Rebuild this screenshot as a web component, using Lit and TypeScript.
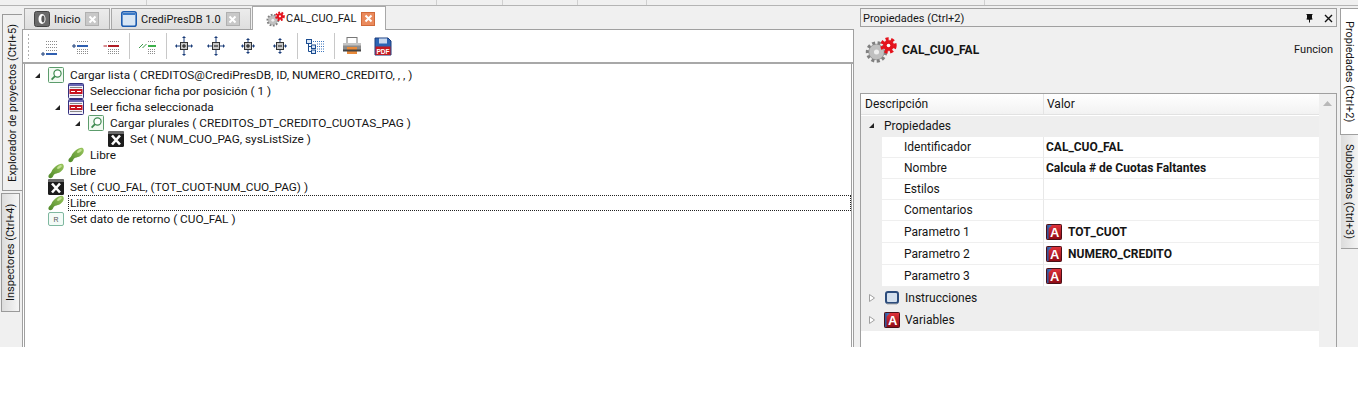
import { LitElement, html, css, svg } from "lit";
import { customElement } from "lit/decorators.js";

const aIcon = () => html`<svg class="i16" viewBox="0 0 16 16">
  <defs><linearGradient id="ag" x1="0" y1="0" x2="0" y2="1"><stop offset="0" stop-color="#e2343c"/><stop offset="1" stop-color="#8c0a14"/></linearGradient></defs>
  <rect x="0.5" y="0.5" width="15" height="15" rx="0.8" fill="url(#ag)" stroke="#4a1018"/>
  <path d="M1 1H6L1 6Z" fill="#3f6fb5"/><rect x="1" y="1" width="1.6" height="14" fill="#35569a"/>
  <text x="8.6" y="13.2" font-family="Liberation Sans" font-weight="700" font-size="13" fill="#fff" text-anchor="middle">A</text>
</svg>`;

const searchIcon = html`<svg class="i16" viewBox="0 0 16 16">
  <rect x="0.5" y="0.5" width="15" height="15" rx="1" fill="#f2faf2" stroke="#5c9c6c"/>
  <circle cx="9.5" cy="6.5" r="3.6" fill="#fff" stroke="#3e8a50" stroke-width="1.2"/>
  <path d="M7 9.2L3.6 12.6" stroke="#3e8a50" stroke-width="1.8"/>
</svg>`;

const readIcon = html`<svg class="i16" viewBox="0 0 16 16">
  <rect x="0.5" y="0.5" width="15" height="15" rx="1" fill="#f2f0fa" stroke="#33307e"/>
  <rect x="1" y="1" width="14" height="2" fill="#6a68b4"/>
  <rect x="2" y="4" width="12" height="1" fill="#888"/>
  <rect x="2" y="12" width="12" height="1" fill="#888"/>
  <rect x="1.5" y="6" width="13" height="5" fill="#c8121e"/>
  <path d="M3 8.5H7M9 8.5H13" stroke="#fff" stroke-width="1"/>
</svg>`;

const footIcon = html`<svg class="i16" viewBox="0 0 16 16">
  <defs><linearGradient id="fg" x1="1" y1="0" x2="0" y2="1"><stop offset="0" stop-color="#9cc860"/><stop offset="1" stop-color="#4c8626"/></linearGradient></defs>
  <path d="M15.8 3C16 7 12 10 8.6 10.4C6.8 10.6 5.8 11.4 5.2 13C4.2 15.8 0.6 16 0.4 13.6C0.3 11.6 2.6 10.8 3.6 8.6C5.6 3.4 14.8 -2.4 15.8 3Z" fill="url(#fg)"/>
  <ellipse cx="11.4" cy="4" rx="2.8" ry="1.2" transform="rotate(-35 11.4 4)" fill="#c4e294"/>
</svg>`;

const xIcon = html`<svg class="i16" viewBox="0 0 16 16">
  <rect x="0" y="0" width="16" height="16" rx="1.5" fill="#1c1c1c"/>
  <path d="M0 1.5Q0 0 1.5 0H14.5Q16 0 16 1.5V3H0Z" fill="#6a6a6a"/>
  <path d="M4 4.5L12 13.5M12 4.5L4 13.5" stroke="#fff" stroke-width="2.6"/>
</svg>`;

const retIcon = html`<svg class="i16" viewBox="0 0 16 16">
  <rect x="0.5" y="1.5" width="15" height="13" rx="1.5" fill="#f3fbf7" stroke="#7fb8a0"/>
  <text x="8" y="11" font-family="Liberation Sans" font-size="7" fill="#555" text-anchor="middle">R</text>
</svg>`;

const gear = (cx: number, cy: number, r: number, fill: string, edge: string, hole: string) => svg`
  <circle cx=${cx} cy=${cy} r=${r} fill="none" stroke=${edge} stroke-width="3.4" stroke-dasharray="3 2.4"/>
  <circle cx=${cx} cy=${cy} r=${r - 1.2} fill=${fill} stroke=${edge} stroke-width="0.6"/>
  <circle cx=${cx} cy=${cy} r=${r * 0.28} fill=${hole}/>`;

const gears = (cls: string) => html`<svg class=${cls} viewBox="0 0 32 26">
  ${gear(11.5, 15, 9, "#c0c0c0", "#808080", "#eee")}
  ${gear(23.5, 8.5, 6.5, "#e4121c", "#e4121c", "#fff")}
</svg>`;

const lines = (x: number, w: number, ys: number[]) => ys.map(
  (y) => svg`<path d=${`M${x} ${y + 0.5}h${w}`} stroke="#8c8c8c" stroke-width="1" stroke-dasharray="1 1"/>`
);

const listIcon = (bar: string, barY: number, ys: number[], mark: unknown, x = 6, w = 11) => html`<svg class="t" viewBox="0 0 20 20">
  ${lines(x, w, ys)}
  <rect x=${x} y=${barY} width=${w} height="2" fill=${bar}/>
  ${mark}
</svg>`;

const cross = (box: string, inner: string, long: boolean) => {
  const a = long ? 1 : 3;
  const b = long ? 19 : 17;
  return html`<svg class="t" viewBox="0 0 20 20">
    <path d=${`M${a + 2} 10H${b - 2}M10 ${a + 1}V${b - 1}`} stroke="#1a3c78" stroke-width="1"/>
    <path d=${`M${a + 2} 8v4l-2-2zM${b - 2} 8v4l2-2zM8 ${a + 1}h4l-2-2zM8 ${b - 1}h4l-2 2z`} fill="#1a3c78"/>
    <rect x="6.5" y="6.5" width="7" height="7" fill=${box} stroke="#333"/>
    <path d=${inner} stroke="#111" stroke-width="1"/>
  </svg>`;
};
const PLUS = "M8 10H12M10 8V12";
const MINUS = "M8 10H12";

const treeIcon = html`<svg class="t" viewBox="0 0 20 20">
  <path d="M3.5 7V15.5M3.5 10.5H7M3.5 15.5H7" stroke="#1a4c90"/>
  <rect x="1.5" y="3.5" width="5" height="4" fill="#dbe8f8" stroke="#1a4c90"/>
  <rect x="6.5" y="9" width="4" height="3.5" fill="#dbe8f8" stroke="#1a4c90"/>
  <rect x="6.5" y="14" width="4" height="3.5" fill="#dbe8f8" stroke="#1a4c90"/>
  <path d="M8 5.5h11M12 8h7M12 10.5h7M12 13h7M12 15.5h7" stroke="#3f78c0" stroke-dasharray="1 1"/>
</svg>`;

const printIcon = html`<svg class="t" viewBox="0 0 20 20">
  <rect x="5" y="1.5" width="10" height="6" fill="#fff" stroke="#777"/>
  <rect x="1" y="7" width="18" height="8" rx="1.5" fill="#8c8c8c"/>
  <rect x="1" y="7" width="18" height="2.5" fill="#c4c4c4"/>
  <rect x="5" y="11" width="10" height="7" fill="#e98a3a"/>
  <rect x="1" y="13.5" width="18" height="2" fill="#444"/>
</svg>`;

const pdfIcon = html`<svg class="t" viewBox="0 0 20 20">
  <path d="M2 2H15L18 5V19H2Z" fill="#2c64b4" stroke="#1c3c7c"/>
  <rect x="6" y="2.5" width="8" height="5" fill="#c8d8ee"/>
  <rect x="2.5" y="10.5" width="15" height="8.5" fill="#c41a20"/>
  <text x="10" y="17.8" font-family="Liberation Sans" font-weight="700" font-size="6.6" fill="#fff" text-anchor="middle">PDF</text>
</svg>`;

const closeBtn = (active: boolean) => html`<span class=${active ? "cl on" : "cl"}>
  <svg viewBox="0 0 9 9"><path d="M1.5 1.5L7.5 7.5M7.5 1.5L1.5 7.5" stroke="#fff" stroke-width="2"/></svg>
</span>`;

const tree = [
  { l: 0, e: true, i: searchIcon, t: "Cargar lista ( CREDITOS@CrediPresDB, ID, NUMERO_CREDITO, , , )" },
  { l: 1, e: false, i: readIcon, t: "Seleccionar ficha por posición ( 1 )" },
  { l: 1, e: true, i: readIcon, t: "Leer ficha seleccionada" },
  { l: 2, e: true, i: searchIcon, t: "Cargar plurales ( CREDITOS_DT_CREDITO_CUOTAS_PAG )" },
  { l: 3, e: false, i: xIcon, t: "Set ( NUM_CUO_PAG, sysListSize )" },
  { l: 1, e: false, i: footIcon, t: "Libre" },
  { l: 0, e: false, i: footIcon, t: "Libre" },
  { l: 0, e: false, i: xIcon, t: "Set ( CUO_FAL, (TOT_CUOT-NUM_CUO_PAG) )" },
  { l: 0, e: false, i: footIcon, t: "Libre", f: true },
  { l: 0, e: false, i: retIcon, t: "Set dato de retorno ( CUO_FAL )" },
];

const props = [
  { d: "Identificador", v: "CAL_CUO_FAL" },
  { d: "Nombre", v: "Calcula # de Cuotas Faltantes" },
  { d: "Estilos", v: "" },
  { d: "Comentarios", v: "" },
  { d: "Parametro 1", v: "TOT_CUOT", a: true },
  { d: "Parametro 2", v: "NUMERO_CREDITO", a: true },
  { d: "Parametro 3", v: "", a: true },
];

@customElement("app-root")
export class AppRoot extends LitElement {
  static styles = css`
    :host { display: block; font-family: Roboto, "Open Sans", sans-serif; font-size: 12px; color: #151515; }
    svg { display: block; flex: none; }
    .i16 { width: 16px; height: 16px; }
    .app { height: 347px; background: #f0f0f0; display: flex; flex-direction: column; overflow: hidden; }
    .strip { height: 6px; flex: none; display: flex; border-bottom: 1px solid #b4b4b4; box-sizing: border-box; }
    .strip i { border-right: 1px solid #d0d0d0; height: 5px; box-sizing: border-box; }
    .s1 { width: 147px; } .s2 { width: 290px; } .s3 { width: 66px; } .s4 { width: 75px; } .s5 { width: 69px; } .s6 { width: 338px; }
    .body { flex: 1; display: flex; min-height: 0; }

    .rail { width: 22px; flex: none; display: flex; flex-direction: column; padding-top: 8px; gap: 2px; box-sizing: border-box; }
    .vt { writing-mode: vertical-rl; white-space: nowrap; box-sizing: border-box; display: flex; align-items: center; justify-content: center; font-size: 11px; }
    .vl { transform: rotate(180deg); border: 1px solid #9a9a9a; }
    .v1 { height: 177px; width: 20px; margin-left: 2px; background: #f0f0f0; border-left: none; }
    .v2 { height: 119px; width: 19px; margin-left: 1px; background: linear-gradient(to left, #dcdcdc, #f6f6f6); }

    .main { width: 832px; flex: none; display: flex; flex-direction: column; }
    .tabs { height: 24px; flex: none; display: flex; align-items: flex-end; padding-left: 2px; gap: 1px; border-bottom: 1px solid #a0a0a0; box-sizing: border-box; }
    .tab { height: 21px; display: flex; align-items: center; box-sizing: border-box; border: 1px solid #a8a8a8; border-bottom: none; background: linear-gradient(#ececec, #dedede); padding-left: 9px; font-size: 11px; }
    .tab.w1 { width: 86px; } .tab.w2 { width: 140px; }
    .tab.w3 { width: 134px; height: 24px; background: #fff; margin-bottom: -1px; padding-left: 13px; }
    .tab svg.ti { width: 16px; height: 16px; margin-right: 4px; }
    .tab svg.tg { width: 19px; height: 16px; margin-right: 1px; }
    .cl { width: 14px; height: 14px; margin-left: 5px; background: #c8c8c8; border: 1px solid #b0b0b0; box-sizing: border-box; display: flex; align-items: center; justify-content: center; }
    .cl.on { background: #ea8a5c; border-color: #d06a3a; }
    .cl svg { width: 9px; height: 9px; }

    .pane { flex: 1; display: flex; flex-direction: column; min-height: 0; background: #fff; border-left: 1px solid #a0a0a0; border-right: 1px solid #a0a0a0; }
    .toolbar { height: 34px; flex: none; display: flex; align-items: center; padding-left: 4px; border-bottom: 2px solid #a8a8a8; box-sizing: border-box; }
    .grip { width: 3px; height: 26px; margin-right: 4.5px; background-image: radial-gradient(#b0b0b0 1px, transparent 1px); background-size: 3px 4px; }
    .b { width: 31px; display: flex; justify-content: center; flex: none; }
    .b.m { width: 33px; } .b.n { width: 32px; } .b.o { width: 30px; }
    .t { width: 20px; height: 20px; }
    .sep { width: 1px; height: 26px; background: #c8c8c8; margin: 0 1px; flex: none; }
    .sep.wide { margin: 0 2px; }

    .tree { flex: 1; margin: 0 1px; background: #fff; border-left: 1px solid #a0a0a0; border-right: 1px solid #a0a0a0; padding-top: 3px; min-height: 0; font-size: 11.8px; }
    .row { height: 16px; display: flex; align-items: center; }
    .exp { width: 16px; flex: none; }
    .exp svg { width: 5px; height: 5px; margin-left: 3px; }
    .lab { flex: 1; height: 16px; line-height: 14px; margin-left: 4px; padding-left: 1px; border: 1px solid transparent; box-sizing: border-box; white-space: nowrap; }
    .lab.f { border: 1px dotted #222; }

    .panel { width: 477px; flex: none; margin-left: 6px; padding-top: 2px; display: flex; flex-direction: column; }
    .phead { height: 19px; flex: none; border: 1px solid #a0a0a0; box-sizing: border-box; display: flex; align-items: center; padding: 1px 3px 0 2px; gap: 10px; font-size: 11px; }
    .phead span { flex: 1; }
    .phead svg { width: 9px; height: 9px; }
    .info { height: 66px; flex: none; display: flex; align-items: flex-start; padding: 10px 4px 0 5px; box-sizing: border-box; }
    .info svg { width: 32px; height: 26px; margin-right: 5px; }
    .info b { flex: 1; padding-top: 6px; }
    .info span { padding-top: 6px; font-size: 11px; }

    .pg { flex: 1; border: 1px solid #a0a0a0; border-bottom: none; display: flex; background: #fff; min-height: 0; }
    .grid { flex: 1; min-width: 0; }
    .sb { width: 17px; flex: none; background: #f0f0f0; display: flex; justify-content: center; padding-top: 7px; box-sizing: border-box; }
    .sb svg { width: 9px; height: 5px; }
    .gh { height: 21px; display: grid; grid-template-columns: 182px 1fr; align-items: center; background: linear-gradient(#ffffff, #f2f2f2); border-bottom: 1px solid #e2e2e2; box-sizing: border-box; }
    .gh span { padding-left: 4px; height: 100%; display: flex; align-items: center; }
    .gh span + span { padding-left: 3px; border-left: 1px solid #e4e4e4; }
    .grp { height: 22px; background: #eeeeee; display: flex; align-items: center; }
    .grp.first { height: 21px; margin-top: 1px; padding-bottom: 2px; box-sizing: border-box; }
    .grp .tw { width: 21px; flex: none; display: flex; justify-content: center; }
    .tw svg { width: 6px; height: 8px; }
    .grp.first .tw svg { width: 5px; height: 5px; }
    .grp .gi { margin: 0 5px 0 2px; }
    .grp .gl { margin-left: 2px; }
    .pr { height: 21px; display: grid; grid-template-columns: 21px 161px 1fr; }
    .pr.t22 { height: 22px; }
    .pr .gut { background: #eeeeee; }
    .pr .d { padding-left: 22px; display: flex; align-items: center; border-bottom: 1px solid #efefef; box-sizing: border-box; }
    .pr .v { padding-left: 2px; display: flex; align-items: center; gap: 6px; font-weight: 700; border-left: 1px solid #e8e8e8; border-bottom: 1px solid #efefef; box-sizing: border-box; }

    .rrail { width: 21px; flex: none; display: flex; flex-direction: column; padding-top: 2px; }
    .r1 { height: 127px; width: 18px; margin-left: 3px; background: #fff; border: 1px solid #a0a0a0; border-right: none; }
    .r2 { height: 114px; width: 17px; margin-left: 4px; background: linear-gradient(to left, #f4f4f4, #dcdcdc); border-bottom: 1px solid #a0a0a0; }
  `;

  render() {
    const tri = html`<svg viewBox="0 0 5 5"><path d="M5 0V5H0Z" fill="#222"/></svg>`;
    const open = html`<svg viewBox="0 0 6 8"><path d="M.5 .5L5.5 4L.5 7.5Z" fill="#fff" stroke="#a0a0a0"/></svg>`;
    return html`<div class="app">
      <div class="strip"><i class="s1"></i><i class="s2"></i><i class="s3"></i><i class="s4"></i><i class="s5"></i><i class="s6"></i></div>
      <div class="body">
        <div class="rail">
          <div class="vt vl v1">Explorador de proyectos (Ctrl+5)</div>
          <div class="vt vl v2">Inspectores (Ctrl+4)</div>
        </div>
        <div class="main">
          <div class="tabs">
            <div class="tab w1">
              <svg class="ti" viewBox="0 0 16 16"><rect x=".5" y=".5" width="15" height="15" rx="2" fill="#6a6a6a" stroke="#444"/><ellipse cx="8" cy="8" rx="3.5" ry="5" fill="#fff"/><ellipse cx="9" cy="8" rx="1.6" ry="3.4" fill="#555"/></svg>
              Inicio${closeBtn(false)}
            </div>
            <div class="tab w2">
              <svg class="ti" viewBox="0 0 16 16"><rect x=".8" y=".8" width="14.4" height="14.4" rx="2" fill="#d8e6f4" stroke="#1c5cb0" stroke-width="1.6"/><rect x="2" y="2" width="12" height="2" fill="#3a7ac8"/></svg>
              CrediPresDB 1.0${closeBtn(false)}
            </div>
            <div class="tab w3">${gears("tg")}CAL_CUO_FAL${closeBtn(true)}</div>
          </div>
          <div class="pane">
            <div class="toolbar">
              <div class="grip"></div>
              <div class="b">${listIcon("#2f5fb0", 17, [5, 8, 11, 14], svg`<path d="M1 18H5M3 16V20" stroke="#1a3c78"/>`)}</div>
              <div class="b">${listIcon("#2f5fb0", 9, [5, 13, 15, 17], svg`<path d="M1 10H5M3 8V12" stroke="#1a3c78"/>`)}</div>
              <div class="b">${listIcon("#b01c24", 9, [5, 13, 15, 17], svg`<path d="M1.5 10H5" stroke="#b01c24"/>`)}</div>
              <div class="sep"></div>
              <div class="b m">${listIcon("#3cb04a", 9, [5, 13, 15, 17], svg`<path d="M2 12L6 8M5.5 12L9.5 8" stroke="#3c9a4a"/>`, 11, 8)}</div>
              <div class="sep wide"></div>
              <div class="b">${cross("#c8c8c8", PLUS, true)}</div>
              <div class="b n">${cross("#c8c8c8", MINUS, true)}</div>
              <div class="b n">${cross("#c8c8c8", PLUS, false)}</div>
              <div class="b n">${cross("#c8c8c8", MINUS, false)}</div>
              <div class="sep"></div>
              <div class="b m">${treeIcon}</div>
              <div class="sep wide"></div>
              <div class="b">${printIcon}</div>
              <div class="b o">${pdfIcon}</div>
            </div>
            <div class="tree">
              ${tree.map((r) => html`<div class="row" style=${`padding-left:${7 + r.l * 20}px`}>
                <div class="exp">${r.e ? tri : ""}</div>
                ${r.i}
                <div class=${r.f ? "lab f" : "lab"}>${r.t}</div>
              </div>`)}
            </div>
          </div>
        </div>
        <div class="panel">
          <div class="phead"><span>Propiedades (Ctrl+2)</span>
            <svg viewBox="0 0 9 9"><path d="M1.5 .5H7.5M4.5 .5V8.5M2.5 1V5H6.5V1M1.5 5H7.5" stroke="#111" fill="#111"/></svg>
            <svg viewBox="0 0 9 9"><path d="M1 1L8 8M8 1L1 8" stroke="#111" stroke-width="1.4"/></svg>
          </div>
          <div class="info">${gears("")}<b>CAL_CUO_FAL</b><span>Funcion</span></div>
          <div class="pg">
            <div class="grid">
              <div class="gh"><span>Descripción</span><span>Valor</span></div>
              <div class="grp first"><div class="tw">${tri}</div><span class="gl">Propiedades</span></div>
              ${props.map((p, i) => html`<div class=${i >= 4 ? "pr t22" : "pr"}>
                <div class="gut"></div><div class="d">${p.d}</div>
                <div class="v">${p.a ? aIcon() : ""}${p.v}</div>
              </div>`)}
              <div class="grp"><div class="tw">${open}</div>
                <svg class="i16 gi" viewBox="0 0 16 16"><rect x="2" y="2" width="12" height="11" rx="2" fill="#d4e0ee" stroke="#2c4c7c" stroke-width="2"/><path d="M3 14H13" stroke="#aaa"/></svg>
                <span>Instrucciones</span></div>
              <div class="grp"><div class="tw">${open}</div><span class="gi">${aIcon()}</span><span>Variables</span></div>
            </div>
            <div class="sb"><svg viewBox="0 0 9 5"><path d="M0 5L4.5 0L9 5Z" fill="#b8b8b8"/></svg></div>
          </div>
        </div>
        <div class="rrail">
          <div class="vt r1">Propiedades (Ctrl+2)</div>
          <div class="vt r2">Subobjetos (Ctrl+3)</div>
        </div>
      </div>
    </div>`;
  }
}
